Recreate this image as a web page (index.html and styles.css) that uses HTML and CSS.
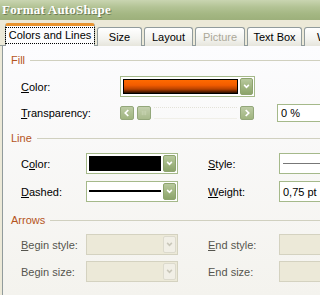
FILE: index.html
```html
<!DOCTYPE html>
<html>
<head>
<meta charset="utf-8">
<link rel="stylesheet" href="styles.css">
</head>
<body>
<div class="win">
  <div class="titlebar">Format AutoShape</div>
  <div class="tabstrip">
    <div class="tab sel"><span class="focus">Colors and Lines</span></div>
    <div class="tab w-size">Size</div>
    <div class="tab w-layout">Layout</div>
    <div class="tab w-pic dis">Picture</div>
    <div class="tab w-text">Text Box</div>
    <div class="tab w-web">Web</div>
  </div>
  <div class="panel">
    <div class="head"><span>Fill</span><i></i></div>
    <div class="row r-fill1">
      <span class="lbl"><u>C</u>olor:</span>
      <div class="combo wide"><div class="field"><div class="sw orange"></div></div><div class="btn"><svg viewBox="0 0 14 18"><path d="M4 7l3 3 3-3" /></svg></div></div>
    </div>
    <div class="row r-fill2">
      <span class="lbl"><u>T</u>ransparency:</span>
      <div class="slider">
        <div class="sbtn"><svg viewBox="0 0 14 14"><path d="M8.5 3.5L5 7l3.5 3.5" /></svg></div>
        <div class="sbtn thumb"><svg viewBox="0 0 14 14"><path class="grip" d="M5 4.5v5M7 4.5v5M9 4.5v5" /></svg></div>
        <div class="track"></div>
        <div class="sbtn"><svg viewBox="0 0 14 14"><path d="M5.5 3.5L9 7l-3.5 3.5" /></svg></div>
      </div>
      <div class="input pct">0 %</div>
    </div>

    <div class="head h-line"><span>Line</span><i></i></div>
    <div class="row r-l1">
      <span class="lbl c1">C<u>o</u>lor:</span>
      <div class="combo mid"><div class="field"><div class="sw black"></div></div><div class="btn"><svg viewBox="0 0 14 18"><path d="M4 7l3 3 3-3" /></svg></div></div>
      <span class="lbl c2"><u>S</u>tyle:</span>
      <div class="input right"><div class="thin"></div></div>
    </div>
    <div class="row r-l2">
      <span class="lbl c1"><u>D</u>ashed:</span>
      <div class="combo mid"><div class="field"><div class="dash"></div></div><div class="btn"><svg viewBox="0 0 14 18"><path d="M4 7l3 3 3-3" /></svg></div></div>
      <span class="lbl c2"><u>W</u>eight:</span>
      <div class="input right">0,75 pt</div>
    </div>

    <div class="head h-arrows"><span>Arrows</span><i></i></div>
    <div class="row r-a1">
      <span class="lbl c1 gray"><u>B</u>egin style:</span>
      <div class="combo mid off"><div class="field"></div><div class="btn"><svg viewBox="0 0 14 18"><path d="M4 7l3 3 3-3" /></svg></div></div>
      <span class="lbl c2 gray"><u>E</u>nd style:</span>
      <div class="input right off"></div>
    </div>
    <div class="row r-a2">
      <span class="lbl c1 gray">Begin size:</span>
      <div class="combo mid off"><div class="field"></div><div class="btn"><svg viewBox="0 0 14 18"><path d="M4 7l3 3 3-3" /></svg></div></div>
      <span class="lbl c2 gray">End size:</span>
      <div class="input right off"></div>
    </div>
  </div>
</div>
</body>
</html>
```
FILE: styles.css
```css
* { box-sizing: border-box; }
html, body { margin: 0; padding: 0; }
body {
  width: 320px;
  height: 295px;
  overflow: hidden;
  background: #ece9d8;
  font-family: "Liberation Sans", Arial, sans-serif;
  font-size: 11px;
  color: #000;
}
.win { width: 320px; height: 295px; display: flex; flex-direction: column; white-space: nowrap; overflow: hidden; }
.titlebar {
  height: 20px;
  flex: none;
  background: linear-gradient(#c9d5b1 0%, #b3c395 35%, #a4b783 70%, #9db07b 100%);
  color: #fff;
  font-family: "Liberation Serif", "DejaVu Serif", serif;
  font-weight: bold;
  font-size: 13px;
  line-height: 20px;
  padding-left: 2px;
  letter-spacing: 0.2px;
  text-shadow: 1px 1px 0 #6e7d56;
}
.tabstrip {
  height: 26px;
  flex: none;
  display: flex;
  align-items: flex-end;
  padding-left: 4px;
  gap: 2px;
  background: #ece9d8;
  border-bottom: 1px solid #919b9c;
  position: relative;
}
.tab {
  height: 19px;
  border: 1px solid #919b9c;
  border-bottom: none;
  border-radius: 3px 3px 0 0;
  background: linear-gradient(#ffffff, #f3f3ef 60%, #e6e5dc);
  display: flex;
  align-items: center;
  justify-content: center;
  flex: none;
  margin-bottom: -1px;
}
.tab.sel {
  width: 90px;
  height: 23px;
  background: #fcfcfe;
  border-top: 3px solid #e8932f;
  padding-bottom: 2px;
  position: relative;
  z-index: 2;
  margin-left: 1px;
}
.focus { border: 1px dotted #000; padding: 1px 3px; line-height: 13px; }
.w-size { width: 45px; }
.w-layout { width: 49px; }
.w-pic { width: 50px; }
.w-text { width: 55px; }
.w-web { width: 40px; justify-content: flex-start; padding-left: 12px; }
.dis { color: #aca899; }

.panel {
  flex: 1;
  background: linear-gradient(#fcfcfe, #f4f3ee);
  border-left: 1px solid #919b9c;
  margin-left: 2px;
  padding: 7px 0 0 8px;
}
.head { display: flex; align-items: center; height: 14px; color: #b5541c; }
.head span { padding: 0 5px 0 0; }
.head i { flex: 1; height: 1px; background: #d0d0bf; }
.h-line { margin-top: 8px; }
.h-arrows { margin-top: 11px; }

.row { display: flex; align-items: center; height: 21px; }
.r-fill1 { margin-top: 9px; }
.r-fill2 { margin-top: 6px; height: 20px; }
.r-l1 { margin-top: 8px; }
.r-l2 { margin-top: 7px; }
.r-a1 { margin-top: 7px; }
.r-a2 { margin-top: 6px; }

.lbl { flex: none; padding-left: 10px; }
.r-fill1 .lbl, .r-fill2 .lbl { width: 109px; }
.c1 { width: 75px; }
.c2 { width: 101px; padding-left: 30px; }
.gray { color: #55554e; }
u { text-decoration: underline; text-underline-offset: 1px; }

.combo { display: flex; height: 21px; flex: none; }
.combo.wide { width: 135px; }
.combo.mid { width: 92px; }
.field {
  flex: 1;
  border: 1px solid #a5b98a;
  border-right: none;
  background: #fff;
  padding: 2px;
  display: flex;
  align-items: center;
}
.btn {
  width: 15px;
  border: 1px solid #a5b98a;
  border-left: none;
  background: #fff;
  padding: 1px 1px 1px 0;
  display: flex;
}
.btn svg {
  width: 13px;
  height: 17px;
  display: block;
  border-radius: 2px;
  background: linear-gradient(#b8c99e, #9fb47f 55%, #8ca46b);
  border: 1px solid #8ea46f;
}
.btn svg path { fill: none; stroke: #fff; stroke-width: 2; }
.sw { flex: 1; height: 15px; border: 1px solid #000; }
.sw.orange { background: linear-gradient(#ff6a00 0%, #f25c00 40%, #b84200 70%, #2a0d00 100%); }
.sw.black { background: #000; }
.dash { flex: 1; height: 2px; background: #000; margin-top: -2px; }

.combo.off .field { background: #ece9d8; border-color: #d4d2c0; }
.combo.off .btn { background: #ece9d8; border-color: #d4d2c0; }
.combo.off .btn svg { background: #f1efe6; border-color: #dcdacd; }
.combo.off .btn svg path { stroke: #c9c7b9; }

.slider { display: flex; align-items: center; width: 134px; flex: none; gap: 3px; height: 20px; }
.sbtn { width: 14px; height: 14px; flex: none; }
.sbtn svg {
  width: 14px; height: 14px; display: block;
  border: 1px solid #93a77a;
  border-radius: 2px;
  background: linear-gradient(#bccba4, #9fb47f);
}
.sbtn svg path { fill: none; stroke: #fff; stroke-width: 2; }
.sbtn svg path.grip { stroke: #c8d4b3; stroke-width: 1; }
.thumb svg { background: linear-gradient(#c4d0ae, #a8ba8c); }
.track { flex: 1; height: 12px; border-top: 1px dotted #e3e2d8; border-bottom: 1px solid #f0efe8; }

.input {
  height: 19px;
  border: 1px solid #a5b98a;
  background: #fff;
  display: flex;
  align-items: center;
  padding-left: 3px;
  flex: none;
  overflow: hidden;
}
.pct { margin-left: 23px; width: 60px; height: 18px; }
.right { width: 60px; height: 21px; }
.thin { width: 100%; height: 1px; background: #777; }
.input.off { background: #ece9d8; border-color: #d4d2c0; }
```
